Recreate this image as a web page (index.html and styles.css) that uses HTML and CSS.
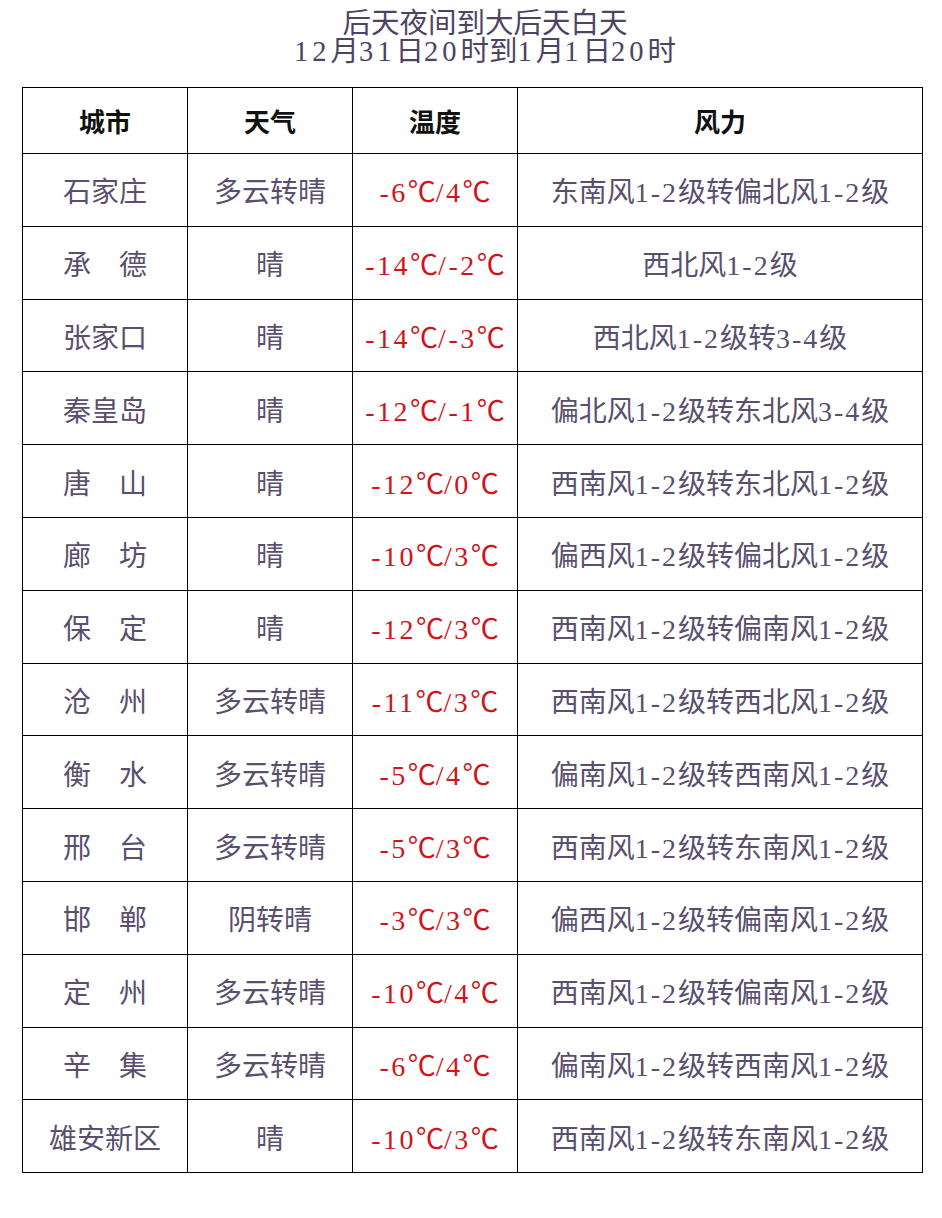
FILE: index.html
```html
<!DOCTYPE html>
<html lang="zh">
<head>
<meta charset="utf-8">
<title>后天夜间到大后天白天</title>
<link rel="stylesheet" href="styles.css">
</head>
<body>
<div class="title">
  <div class="l1">后天夜间到大后天白天</div>
  <div class="l2"><span class="d">12</span>月<span class="d">31</span>日<span class="d">20</span>时到<span class="d">1</span>月<span class="d">1</span>日<span class="d">20</span>时</div>
</div>
<table class="wx">
  <colgroup>
    <col class="c1"><col class="c2"><col class="c3"><col class="c4">
  </colgroup>
  <thead>
    <tr><th>城市</th><th>天气</th><th>温度</th><th>风力</th></tr>
  </thead>
  <tbody>
    <tr><td>石家庄</td><td>多云转晴</td><td class="t">-6<span class="deg">℃</span>/4<span class="deg">℃</span></td><td>东南风<span class="n">1-2</span>级转偏北风<span class="n">1-2</span>级</td></tr>
    <tr><td>承　德</td><td>晴</td><td class="t">-14<span class="deg">℃</span>/-2<span class="deg">℃</span></td><td>西北风<span class="n">1-2</span>级</td></tr>
    <tr><td>张家口</td><td>晴</td><td class="t">-14<span class="deg">℃</span>/-3<span class="deg">℃</span></td><td>西北风<span class="n">1-2</span>级转<span class="n">3-4</span>级</td></tr>
    <tr><td>秦皇岛</td><td>晴</td><td class="t">-12<span class="deg">℃</span>/-1<span class="deg">℃</span></td><td>偏北风<span class="n">1-2</span>级转东北风<span class="n">3-4</span>级</td></tr>
    <tr><td>唐　山</td><td>晴</td><td class="t">-12<span class="deg">℃</span>/0<span class="deg">℃</span></td><td>西南风<span class="n">1-2</span>级转东北风<span class="n">1-2</span>级</td></tr>
    <tr><td>廊　坊</td><td>晴</td><td class="t">-10<span class="deg">℃</span>/3<span class="deg">℃</span></td><td>偏西风<span class="n">1-2</span>级转偏北风<span class="n">1-2</span>级</td></tr>
    <tr><td>保　定</td><td>晴</td><td class="t">-12<span class="deg">℃</span>/3<span class="deg">℃</span></td><td>西南风<span class="n">1-2</span>级转偏南风<span class="n">1-2</span>级</td></tr>
    <tr><td>沧　州</td><td>多云转晴</td><td class="t">-11<span class="deg">℃</span>/3<span class="deg">℃</span></td><td>西南风<span class="n">1-2</span>级转西北风<span class="n">1-2</span>级</td></tr>
    <tr><td>衡　水</td><td>多云转晴</td><td class="t">-5<span class="deg">℃</span>/4<span class="deg">℃</span></td><td>偏南风<span class="n">1-2</span>级转西南风<span class="n">1-2</span>级</td></tr>
    <tr><td>邢　台</td><td>多云转晴</td><td class="t">-5<span class="deg">℃</span>/3<span class="deg">℃</span></td><td>西南风<span class="n">1-2</span>级转东南风<span class="n">1-2</span>级</td></tr>
    <tr><td>邯　郸</td><td>阴转晴</td><td class="t">-3<span class="deg">℃</span>/3<span class="deg">℃</span></td><td>偏西风<span class="n">1-2</span>级转偏南风<span class="n">1-2</span>级</td></tr>
    <tr><td>定　州</td><td>多云转晴</td><td class="t">-10<span class="deg">℃</span>/4<span class="deg">℃</span></td><td>西南风<span class="n">1-2</span>级转偏南风<span class="n">1-2</span>级</td></tr>
    <tr><td>辛　集</td><td>多云转晴</td><td class="t">-6<span class="deg">℃</span>/4<span class="deg">℃</span></td><td>偏南风<span class="n">1-2</span>级转西南风<span class="n">1-2</span>级</td></tr>
    <tr><td>雄安新区</td><td>晴</td><td class="t">-10<span class="deg">℃</span>/3<span class="deg">℃</span></td><td>西南风<span class="n">1-2</span>级转东南风<span class="n">1-2</span>级</td></tr>
  </tbody>
</table>
</body>
</html>
```
FILE: styles.css
```css
html, body {
  margin: 0;
  padding: 0;
  background: #ffffff;
}
body {
  font-family: "Liberation Serif", "Noto Sans CJK SC", serif;
  color: #5a4f6e;
}
.title {
  padding-top: 10px;
  padding-left: 28px;
  text-align: center;
  font-size: 28.5px;
  line-height: 28px;
  color: #4d4463;
  margin-bottom: 21px;
}
.title .d {
  letter-spacing: 4px;
}
.wx {
  margin-left: 22px;
  width: 901px;
  border-collapse: collapse;
  table-layout: fixed;
}
.c1, .c2, .c3 { width: 165px; }
.c4 { width: 405px; }
.wx th, .wx td {
  border: 1.5px solid #000;
  text-align: center;
  vertical-align: middle;
  padding: 0;
  font-size: 28px;
  font-weight: normal;
}
.wx th {
  height: 65px;
  color: #111;
  font-weight: bold;
  font-size: 26px;
}
.wx td {
  height: 70.8px;
  padding-top: 1px;
}
.wx td.t {
  color: #d0141a;
  letter-spacing: 2.5px;
}
.deg {
  font-family: "Noto Sans CJK SC", sans-serif;
  letter-spacing: 0;
}
.n {
  letter-spacing: 2px;
}
```
